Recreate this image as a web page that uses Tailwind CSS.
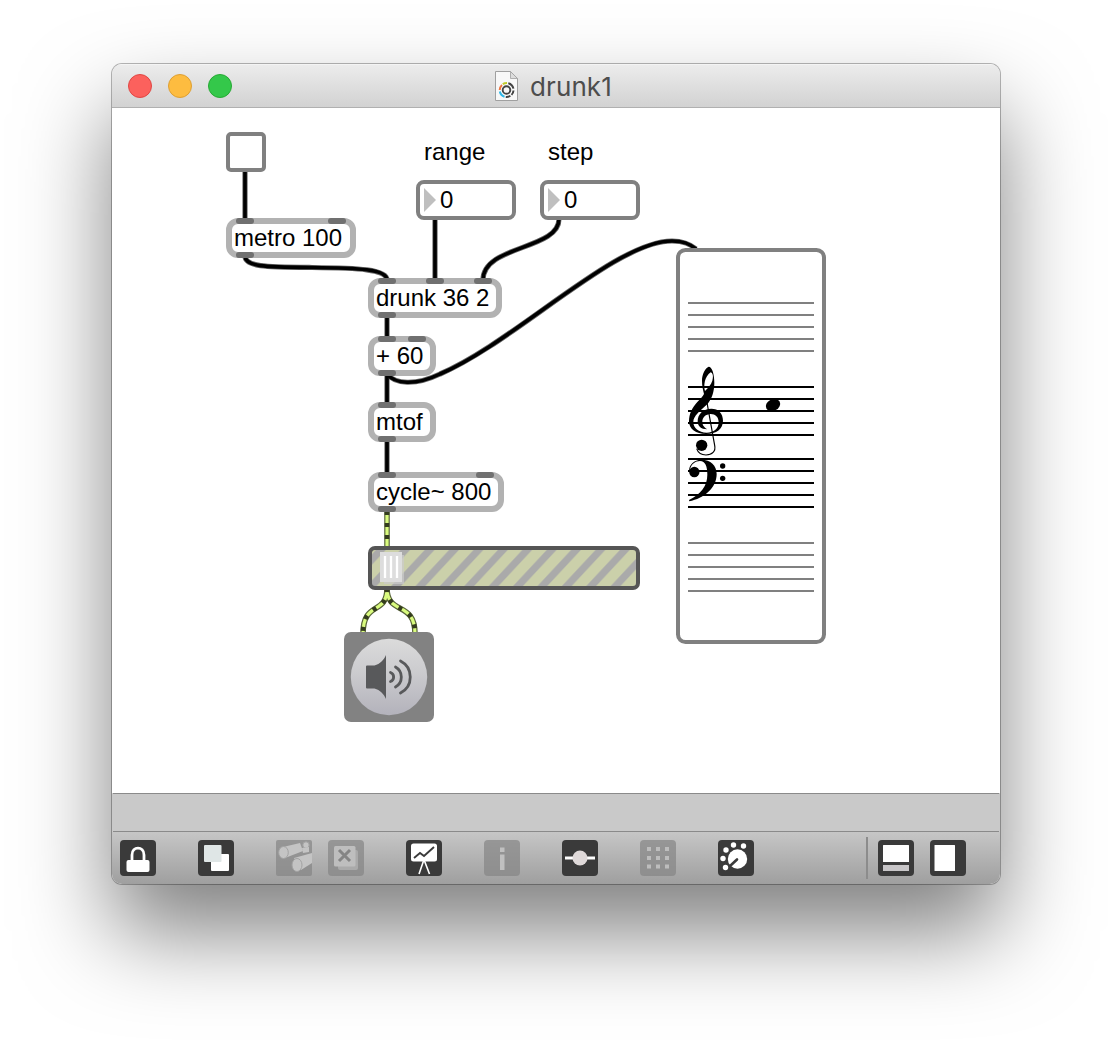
<!DOCTYPE html>
<html lang="en">
<head>
<meta charset="utf-8">
<title>drunk1</title>
<script src="https://cdn.jsdelivr.net/npm/@tailwindcss/browser@4"></script>
</head>
<body class="bg-white w-[1112px] h-[1044px] overflow-hidden pt-16 pl-28 font-['Liberation_Sans',Arial,sans-serif] text-black">
<div class="w-[888px] h-[820px] flex flex-col rounded-[10px] overflow-hidden bg-white shadow-[0_0_0_1px_rgba(0,0,0,0.28),0_48px_90px_rgba(0,0,0,0.5)]">

  <!-- title bar -->
  <header class="h-11 shrink-0 flex items-center bg-linear-to-b from-[#ececec] to-[#d2d2d2] border-b border-[#b0b0b0] border-t border-t-[#f4f4f4] px-4">
    <div class="flex gap-4 w-[366px]">
      <span class="size-6 rounded-full bg-[#fc615d] border border-[#df4744]"></span>
      <span class="size-6 rounded-full bg-[#fdbc40] border border-[#dd9f33]"></span>
      <span class="size-6 rounded-full bg-[#34c84a] border border-[#27a934]"></span>
    </div>
    <svg class="shrink-0" width="26" height="32" viewBox="494 70 26 32">
      <path d="M495.500 71.500H510.500L517.500 78.500V100.500H495.500Z" fill="#f8f8f8" stroke="#a0a0a0"/>
      <path d="M510.500 71.500V78.500H517.500Z" fill="#ddd" stroke="#a0a0a0" stroke-width="0.8"/>
      <circle cx="506.500" cy="90" r="3.800" fill="none" stroke="#444" stroke-width="1.900"/>
      <g fill="none" stroke-width="2">
        <path d="M502.800 84.200A7 7 0 0 1 507 83" stroke="#c2cc2e"/>
        <path d="M499.700 90A7 7 0 0 1 502 84.900" stroke="#ee7540"/>
        <path d="M504.500 96.700A7 7 0 0 1 499.800 91.500" stroke="#2fb8e8"/>
        <path d="M508.300 83.200A7 7 0 0 1 513.400 88.600M513.500 90.500A7 7 0 0 1 511.500 94.900M510.400 95.800A7 7 0 0 1 505.800 97" stroke="#444"/>
      </g>
    </svg>
    <h1 class="ml-2.5 pt-0.5 text-[26px] leading-8 tracking-[0.1px] font-[Inter,Roboto,sans-serif] text-[#4d4d4d]">drunk1</h1>
  </header>

  <!-- patcher canvas -->
  <main class="relative h-[685px] shrink-0 bg-white text-2xl leading-7">
    <svg class="absolute inset-0" width="888" height="685" viewBox="112 108 888 685" fill="none">
      <defs>
        <g id="cords">
          <path d="M245 172V220M435 220V280M387 316V338M387 374V404M387 440V474"/>
          <path d="M245 256C245 267 266 267 312 267.500S387 269 387 280"/>
          <path d="M559 219C559 250 483 245 483 280"/>
          <path d="M387 374C395 384 415 386 440 374C515 342 615 241 672 241C684 241 690 244 696 249"/>
        </g>
        <g id="signal"><path d="M387 511V548"/><path d="M387 588C387 616 363 600 363 634"/><path d="M387 588C387 616 415 600 415 634"/></g>
      </defs>
      <use href="#cords" stroke="#666" stroke-width="5.200"/><use href="#cords" stroke="#000" stroke-width="3.600"/>
      <use href="#signal" stroke="#59653a" stroke-width="5.600"/><use href="#signal" stroke="#d9fb7e" stroke-width="3.200"/>
      <use href="#signal" stroke="#343c1e" stroke-width="4.600" stroke-dasharray="4 8"/>
    </svg>

    <div class="absolute left-[114px] top-[24px] size-10 border-4 border-[#808080] rounded-[5px] bg-white"></div>
    <div class="absolute left-[312px] top-[30px]">range</div>
    <div class="absolute left-[436px] top-[30px]">step</div>

    <div class="absolute left-[304px] top-[72px] w-[100px] h-10 border-4 border-[#808080] rounded-lg bg-white flex items-center pl-1">
      <svg width="12" height="24"><path d="M0 0L12 12L0 24Z" fill="#bfbfbf"/></svg><span class="ml-1">0</span>
    </div>
    <div class="absolute left-[428px] top-[72px] w-[100px] h-10 border-4 border-[#808080] rounded-lg bg-white flex items-center pl-1">
      <svg width="12" height="24"><path d="M0 0L12 12L0 24Z" fill="#bfbfbf"/></svg><span class="ml-1">0</span>
    </div>

    <div class="absolute left-[114px] top-[110px] w-[130px] h-10 border-6 border-[#b2b2b2] rounded-xl bg-white flex items-center pl-0.5">metro 100
      <i class="absolute left-1 -top-1.5 w-[18px] h-1.5 rounded-full bg-[#707070]"></i>
      <i class="absolute left-24 -top-1.5 w-[18px] h-1.5 rounded-full bg-[#707070]"></i>
      <i class="absolute left-1 -bottom-1.5 w-[18px] h-1.5 rounded-full bg-[#707070]"></i>
    </div>
    <div class="absolute left-[256px] top-[170px] w-[134px] h-10 border-6 border-[#b2b2b2] rounded-xl bg-white flex items-center pl-0.5">drunk 36 2
      <i class="absolute left-1 -top-1.5 w-[18px] h-1.5 rounded-full bg-[#707070]"></i>
      <i class="absolute left-[52px] -top-1.5 w-[18px] h-1.5 rounded-full bg-[#707070]"></i>
      <i class="absolute left-[100px] -top-1.5 w-[18px] h-1.5 rounded-full bg-[#707070]"></i>
      <i class="absolute left-1 -bottom-1.5 w-[18px] h-1.5 rounded-full bg-[#707070]"></i>
    </div>
    <div class="absolute left-[256px] top-[228px] w-[68px] h-10 border-6 border-[#b2b2b2] rounded-xl bg-white flex items-center pl-0.5 whitespace-nowrap">+ 60
      <i class="absolute left-1 -top-1.5 w-[18px] h-1.5 rounded-full bg-[#707070]"></i>
      <i class="absolute left-[34px] -top-1.5 w-[18px] h-1.5 rounded-full bg-[#707070]"></i>
      <i class="absolute left-1 -bottom-1.5 w-[18px] h-1.5 rounded-full bg-[#707070]"></i>
    </div>
    <div class="absolute left-[256px] top-[294px] w-[68px] h-10 border-6 border-[#b2b2b2] rounded-xl bg-white flex items-center pl-0.5">mtof
      <i class="absolute left-1 -top-1.5 w-[18px] h-1.5 rounded-full bg-[#707070]"></i>
      <i class="absolute left-1 -bottom-1.5 w-[18px] h-1.5 rounded-full bg-[#707070]"></i>
    </div>
    <div class="absolute left-[256px] top-[364px] w-[136px] h-10 border-6 border-[#b2b2b2] rounded-xl bg-white flex items-center pl-0.5 whitespace-nowrap">cycle~ 800
      <i class="absolute left-1 -top-1.5 w-[18px] h-1.5 rounded-full bg-[#707070]"></i>
      <i class="absolute left-[102px] -top-1.5 w-[18px] h-1.5 rounded-full bg-[#707070]"></i>
      <i class="absolute left-1 -bottom-1.5 w-[18px] h-1.5 rounded-full bg-[#707070]"></i>
    </div>

    <!-- gain slider -->
    <svg class="absolute left-[256px] top-[438px]" width="272" height="44" viewBox="368 546 272 44">
      <defs>
        <pattern id="stripes" width="24.400" height="36" patternUnits="userSpaceOnUse" patternTransform="translate(415.500 550) skewX(-43)">
          <path d="M9.200 0H19V36H9.200Z" fill="#aaaaaa"/>
        </pattern>
      </defs>
      <rect x="370" y="548" width="268" height="40" rx="5" fill="#cbd0aa"/>
      <rect x="370" y="548" width="268" height="40" rx="5" fill="url(#stripes)"/>
      <rect x="370" y="548" width="268" height="40" rx="5" fill="none" stroke="#555" stroke-width="4"/>
      <path d="M384 555H404V584H384Z" fill="#cccccc" fill-opacity="0.700"/>
      <path d="M380 552H402V582H380Z" fill="#dddddd"/>
      <path d="M385 556V578M391 556V578M397 556V578" stroke="#fff" stroke-width="2.300"/>
    </svg>

    <!-- audio output -->
    <svg class="absolute left-[232px] top-[524px]" width="90" height="90" viewBox="344 632 90 90">
      <defs><linearGradient id="disc" x2="0" y2="1"><stop stop-color="#dbdbdb"/><stop offset="0.450" stop-color="#cbcbce"/><stop offset="1" stop-color="#b3b2bb"/></linearGradient></defs>
      <rect x="344" y="632" width="90" height="90" rx="7" fill="#828282"/>
      <circle cx="389" cy="677" r="38.200" fill="url(#disc)"/>
      <path d="M367 665.500H374.500C380 664 384 660 386 655V699C384 694 380 690 374.500 688.500H367Q366 688.500 366 687.500V666.500Q366 665.500 367 665.500Z" fill="#58595b"/>
      <g fill="none" stroke="#58595b" stroke-width="2.800" stroke-linecap="round"><path d="M390.500 672.500A4.800 4.800 0 0 1 390.500 681.500"/><path d="M395.500 667A11.500 11.500 0 0 1 395.500 687"/><path d="M400.500 661A18 18 0 0 1 400.500 693"/></g>
    </svg>

    <!-- grand staff -->
    <svg class="absolute left-[564px] top-[140px]" width="150" height="396" viewBox="676 248 150 396">
      <rect x="678" y="250" width="146" height="392" rx="7.500" fill="#fff" stroke="#808080" stroke-width="4"/>
      <path d="M688 303H814M688 315H814M688 327H814M688 339H814M688 351H814M688 543H814M688 555H814M688 567H814M688 579H814M688 591H814" stroke="#808080" stroke-width="2"/>
      <path d="M688 387H814M688 399H814M688 411H814M688 423H814M688 435H814M688 459H814M688 471H814M688 483H814M688 495H814M688 507H814" stroke="#000" stroke-width="2"/>
      <ellipse cx="773" cy="405" rx="7.500" ry="5.800" transform="rotate(-28 773 405)"/>
      <g transform="translate(680 360) scale(0.33333)">
        <path fill-rule="evenodd" d="M86 20C76 24 66 42 66 62C66 78 69 90 72 102C68 110 60 118 52 126C36 144 27 162 27 184C27 208 48 222 78 222C110 222 129 206 129 182C129 160 115 146 94 146C70 146 53 162 53 184C53 198 62 208 82 208C70 200 67 194 67 185C67 173 77 162 92 162C106 162 116 171 116 187C116 206 102 218 80 218C56 218 40 204 40 186C40 168 60 152 80 134C96 118 103 94 103 68C103 44 97 20 86 20ZM92 37C100 40 100 52 97 62C93 74 84 84 75 93C70 76 74 50 92 37Z"/>
        <path d="M76 100L104 256C108 274 96 285 78 285C64 285 54 278 50 266" fill="none" stroke="#000" stroke-width="3.500"/>
        <circle cx="65" cy="256" r="17"/>
        <circle cx="43" cy="336" r="15.500"/>
        <path d="M27 336C26 314 42 299 64 299C92 299 110 316 110 342C110 384 72 415 28 424L27 420C62 402 82 378 82 344C82 320 76 303 60 303C46 303 34 312 30 328Z"/>
        <circle cx="128" cy="318" r="8"/><circle cx="128" cy="355" r="8"/>
      </g>
    </svg>
  </main>

  <!-- status strip -->
  <div class="h-[39px] shrink-0 mx-px border-y border-[#8a8a8a] bg-[#c9c9c9] outline outline-[#c9c9c9]"></div>

  <!-- toolbar -->
  <footer class="flex-1 flex items-center px-2 bg-linear-to-b from-[#c6c6c6] to-[#9f9f9f]">
    <svg width="36" height="36" viewBox="0 0 36 36"><rect width="36" height="36" rx="4" fill="#3a3a3a"/><rect x="6.500" y="20" width="23" height="12" rx="2" fill="#fff"/><path d="M12 21V15C12 5.800 24 5.800 24 15V21" fill="none" stroke="#fff" stroke-width="2.800"/></svg>
    <svg class="ml-[42px]" width="36" height="36" viewBox="0 0 36 36"><rect width="36" height="36" rx="4" fill="#3a3a3a"/><rect x="13" y="14" width="18" height="17" rx="1" fill="#fff"/><rect x="6" y="5" width="17.500" height="17" rx="1" fill="#dfe6e6"/></svg>
    <svg class="ml-[42px]" width="36" height="36" viewBox="0 0 36 36"><rect width="36" height="36" rx="2" fill="#858585" fill-opacity="0.700"/><g fill="#c4c4c4"><path d="M7 7L24 3L27 11L9 18Z"/><ellipse cx="7.500" cy="12.500" rx="4.800" ry="6" stroke="#a2a2a2"/><circle cx="30" cy="5" r="3.200" stroke="#a2a2a2"/><path d="M26 8L33 7V12L27 13Z"/><path d="M18 18L36 13V23L25 30Z"/><ellipse cx="21" cy="25" rx="5" ry="6.500" stroke="#a2a2a2"/></g></svg>
    <svg class="ml-4" width="36" height="36" viewBox="0 0 36 36"><rect width="36" height="36" rx="4" fill="#858585" fill-opacity="0.700"/><rect x="10" y="10" width="20" height="20" rx="2" fill="#aaaaaa"/><rect x="6" y="6" width="21.500" height="20.500" rx="1.500" fill="#bebebe"/><path d="M11 10L22 21M22 10L11 21" stroke="#858585" stroke-width="3"/></svg>
    <svg class="ml-[42px]" width="36" height="36" viewBox="0 0 36 36"><rect width="36" height="36" rx="4" fill="#3a3a3a"/><rect x="5" y="3.500" width="26" height="18" rx="2.500" fill="#fff"/><path d="M8 18L14 13L18 16L28 7" fill="none" stroke="#3a3a3a" stroke-width="1.900"/><path d="M17.500 21L13 34M18.500 21L23.500 34" stroke="#fff" stroke-width="1.600"/></svg>
    <svg class="ml-[42px]" width="36" height="36" viewBox="0 0 36 36"><rect width="36" height="36" rx="4" fill="#858585" fill-opacity="0.700"/><path d="M16 7.500H20.500V12H16ZM16 14.500H20.500V30H16Z" fill="#c0c0c0"/></svg>
    <svg class="ml-[42px]" width="36" height="36" viewBox="0 0 36 36"><rect width="36" height="36" rx="4" fill="#3a3a3a"/><path d="M3 18H33" stroke="#fff" stroke-width="3"/><circle cx="18" cy="18" r="7.500" fill="#dfd9d9"/></svg>
    <svg class="ml-[42px]" width="36" height="36" viewBox="0 0 36 36"><rect width="36" height="36" rx="4" fill="#858585" fill-opacity="0.700"/><path d="M7 9H11M16 9H20M25 9H29M7 18H11M16 18H20M25 18H29M7 26.500H11M16 26.500H20M25 26.500H29" stroke="#bdbdbd" stroke-width="4"/></svg>
    <svg class="ml-[42px]" width="36" height="36" viewBox="0 0 36 36"><rect width="36" height="36" rx="4" fill="#3a3a3a"/><g fill="#fff"><circle cx="19.500" cy="19" r="9.700"/><circle cx="25.500" cy="6" r="2.700"/><circle cx="15.500" cy="5" r="2.700"/><circle cx="8" cy="10" r="2.700"/><circle cx="5" cy="18.500" r="2.700"/><circle cx="7.500" cy="27.500" r="2.700"/></g><path d="M19 19.500L12 26" stroke="#3a3a3a" stroke-width="2.600" stroke-linecap="round"/></svg>
    <span class="ml-28 w-0.5 h-[42px] bg-[#8c8c8c]"></span>
    <svg class="ml-2.5" width="36" height="36" viewBox="0 0 36 36"><rect width="36" height="36" rx="4" fill="#3a3a3a"/><rect x="5" y="5" width="26" height="17" rx="0.500" fill="#fff"/><rect x="5" y="25" width="26" height="6" fill="#c8c6c8"/></svg>
    <svg class="ml-4" width="36" height="36" viewBox="0 0 36 36"><rect width="36" height="36" rx="4" fill="#3a3a3a"/><rect x="4.500" y="5" width="20.500" height="26" rx="0.500" fill="#fff"/></svg>
  </footer>
</div>
</body>
</html>
